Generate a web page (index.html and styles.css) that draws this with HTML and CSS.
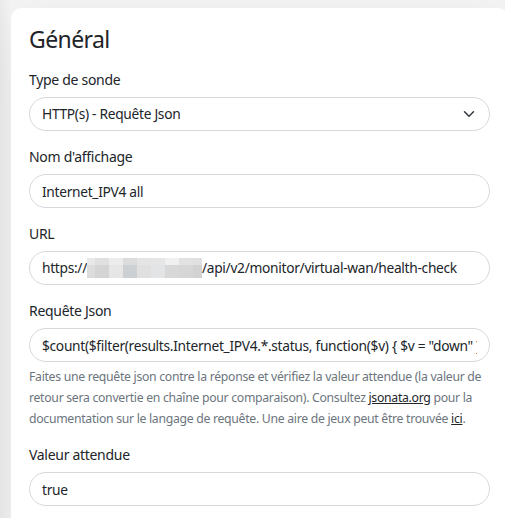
FILE: index.html
```html
<!DOCTYPE html>
<html lang="fr">
  <head>
    <meta charset="UTF-8" />
    <meta name="viewport" content="width=device-width, initial-scale=1.0" />
    <title>Général</title>
    <link rel="stylesheet" href="styles.css">
  </head>
  <body>
    <div class="shadow-box">
      <h2 class="title">Général</h2>

      <div class="field-group">
        <label class="form-label" for="type">Type de sonde</label>
        <select id="type" class="form-select">
          <option>HTTP(s) - Requête Json</option>
        </select>
      </div>

      <div class="field-group">
        <label class="form-label" for="name">Nom d'affichage</label>
        <input id="name" class="form-control" type="text" value="Internet_IPV4 all" />
      </div>

      <div class="field-group">
        <label class="form-label">URL</label>
        <div class="form-control">
          <span>https://</span><span class="mosaic">
            <span style="background:#e8e8e8"></span><span style="background:#e0e0e0"></span><span style="background:#ececec"></span><span style="background:#dcdcdc"></span><span style="background:#e4e4e4"></span><span style="background:#e6e6e6"></span><span style="background:#f0f0f0"></span><span style="background:#e2e2e2"></span><span style="background:#e0e0e0"></span>
            <span style="background:#dcdcdc"></span><span style="background:#d4d4d4"></span><span style="background:#e6e6e6"></span><span style="background:#cdd0d3"></span><span style="background:#e0e0e0"></span><span style="background:#e2e4e6"></span><span style="background:#d8d8d8"></span><span style="background:#d6d6d6"></span><span style="background:#d2d2d2"></span>
          </span><span>/api/v2/monitor/virtual-wan/health-check</span>
        </div>
      </div>

      <div class="field-group">
        <label class="form-label" for="query">Requête Json</label>
        <input id="query" class="form-control" type="text" value='$count($filter(results.Internet_IPV4.*.status, function($v) { $v = "down" }))' />
        <div class="form-text">
          Faites une requête json contre la réponse et vérifiez la valeur attendue (la valeur de retour sera convertie en chaîne pour comparaison). Consultez <a href="#">jsonata.org</a> pour la documentation sur le langage de requête. Une aire de jeux peut être trouvée <a href="#">ici</a>.
        </div>
      </div>

      <div class="field-group">
        <label class="form-label" for="expected">Valeur attendue</label>
        <input id="expected" class="form-control" type="text" value="true" />
      </div>
    </div>
  </body>
</html>
```

FILE: styles.css
```css
html,
body {
  margin: 0;
  height: 100%;
  overflow: hidden;
}
body {
  font-family: "Noto Sans", "Open Sans", sans-serif;
  color: #212529;
  background: linear-gradient(90deg, #ebebeb 0, #f5f5f5 11px);
  padding: 8px 0 0 11px;
  box-sizing: border-box;
}
.shadow-box {
  width: 497px;
  min-height: 600px;
  box-sizing: border-box;
  padding: 17px 18px 0;
  background: #fff;
  border-radius: 10px;
  box-shadow: 0 15px 70px rgba(0, 0, 0, 0.08);
}
.title {
  margin: 0 0 16px;
  font-size: 23px;
  font-weight: 400;
  line-height: 29px;
  letter-spacing: -0.6px;
}
.field-group {
  margin-bottom: 16px;
}
.form-label {
  display: block;
  margin-bottom: 8px;
  font-size: 14px;
  line-height: 19px;
  letter-spacing: -0.3px;
}
.form-control,
.form-select {
  display: block;
  width: 100%;
  height: 34px;
  box-sizing: border-box;
  margin: 0;
  padding: 0 12px;
  font-family: inherit;
  font-size: 13.75px;
  line-height: 32px;
  letter-spacing: -0.3px;
  color: #212529;
  background-color: #fff;
  border: 1px solid #d5d9de;
  border-radius: 17px;
  outline: none;
  white-space: nowrap;
  overflow: hidden;
}
.form-select {
  appearance: none;
  -webkit-appearance: none;
  background-image: url("data:image/svg+xml,%3csvg xmlns='http://www.w3.org/2000/svg' viewBox='0 0 16 16'%3e%3cpath fill='none' stroke='%23343a40' stroke-linecap='round' stroke-linejoin='round' stroke-width='2' d='m2 5 6 6 6-6'/%3e%3c/svg%3e");
  background-repeat: no-repeat;
  background-position: right 12px center;
  background-size: 16px 12px;
}
.mosaic {
  display: inline-grid;
  grid-template-columns: 8px 14px 14px 14px 14px 14px 14px 14px 9px;
  grid-template-rows: 7px 13px;
  vertical-align: middle;
  margin-top: -2px;
}
.form-text {
  margin-top: 4px;
  font-size: 12.25px;
  line-height: 21px;
  letter-spacing: -0.3px;
  color: #6c757d;
}
.form-text a {
  color: #212529;
}
```
